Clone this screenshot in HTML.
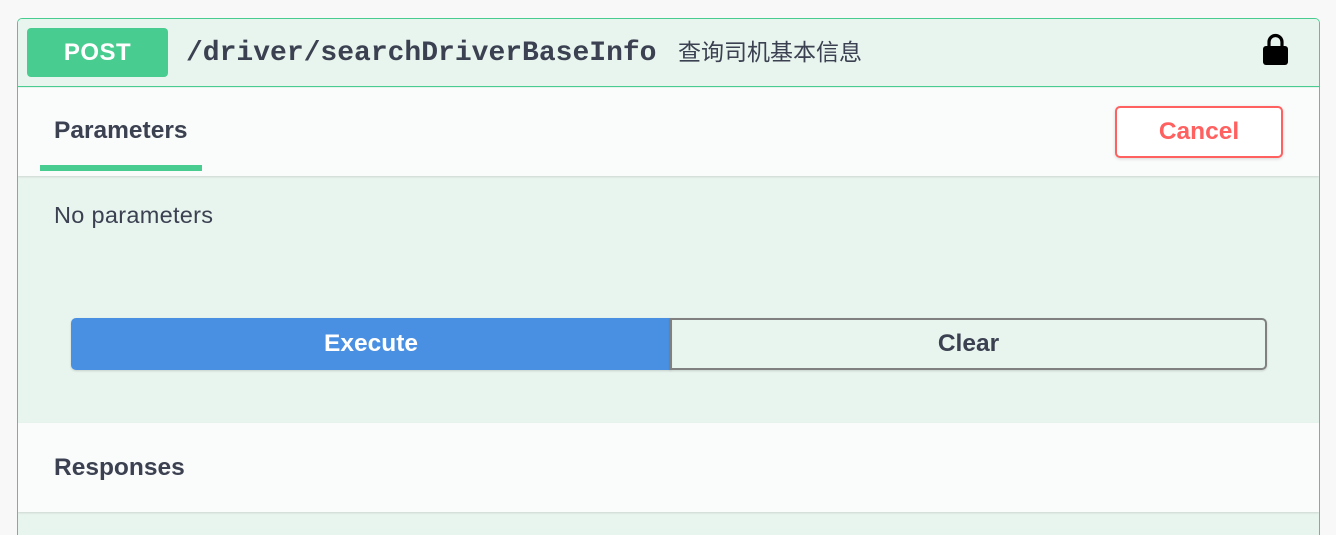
<!DOCTYPE html>
<html style="width:1336px;height:535px;overflow:hidden"><head><meta charset="utf-8"><style>
*{box-sizing:border-box;margin:0;padding:0}
body{width:1336px;height:535px;background:#f8f8f8;position:relative;overflow:hidden;font-family:"Liberation Sans","Noto Sans CJK SC",sans-serif;color:#3b4151}
.box{position:absolute;left:17px;top:18px;width:1303px;height:530px;border:1px solid #49cc90;border-radius:5px;background:#e8f4ee;overflow:hidden}
.hdr{position:absolute;left:0;top:0;right:0;height:68px;border-bottom:1px solid #49cc90;background:#e8f4ee}
.post{position:absolute;left:9px;top:9px;width:141px;height:49px;background:#49cc90;border-radius:4px;color:#fff;font-weight:bold;font-size:24px;letter-spacing:.5px;text-align:center;line-height:49px}
.path{position:absolute;left:168px;top:19px;font-family:"Liberation Mono",monospace;font-weight:bold;font-size:28px;color:#3b4151;line-height:32px;white-space:nowrap}
.desc{position:absolute;left:660px;top:18px;font-size:23px;color:#3b4151;line-height:30px;white-space:nowrap}
.lock{position:absolute;left:1244px;top:14px}
.sec{position:absolute;left:0;right:0;background:#fafbfb;box-shadow:0 1px 2px rgba(0,0,0,.12)}
.tab{position:absolute;left:36px;top:29px;font-weight:bold;font-size:24.5px;white-space:nowrap}
.uline{position:absolute;left:22px;top:77px;width:162px;height:6px;background:#49cc90}
.cancel{position:absolute;left:1097px;top:18px;width:168px;height:52px;border:2px solid #ff6060;border-radius:5px;color:#ff6060;font-weight:bold;font-size:24.5px;text-align:center;line-height:48px;background:#fff;box-shadow:0 1px 3px rgba(0,0,0,.15)}
.np{position:absolute;left:36px;top:183px;font-size:23.5px;letter-spacing:.3px;white-space:nowrap}
.exe{position:absolute;left:53px;top:299px;width:600px;height:52px;background:#4990e2;border-radius:5px 0 0 5px;color:#fff;font-weight:bold;font-size:24.5px;text-align:center;line-height:52px;box-shadow:0 1px 2px rgba(0,0,0,.15)}
.clr{position:absolute;left:652px;top:299px;width:597px;height:52px;border:2px solid #808080;border-radius:0 5px 5px 0;color:#3b4151;font-weight:bold;font-size:24.5px;text-align:center;line-height:48px;box-shadow:0 1px 2px rgba(0,0,0,.15)}
</style></head><body>
<div class="box">
 <div class="hdr">
  <div class="post">POST</div>
  <div class="path">/driver/searchDriverBaseInfo</div>
  <div class="desc">查询司机基本信息</div>
  <svg class="lock" width="27" height="33" viewBox="0 0 27 33"><path d="M7 14V9a6.5 6.5 0 0 1 13 0v5" fill="none" stroke="#000" stroke-width="3.2"/><rect x="1" y="13" width="25" height="19" rx="3" fill="#000"/></svg>
 </div>
 <div class="sec" style="top:69px;height:88px">
  <div class="tab">Parameters</div>
  <div class="uline"></div>
  <div class="cancel">Cancel</div>
 </div>
 <div class="np">No parameters</div>
 <div class="exe">Execute</div>
 <div class="clr">Clear</div>
 <div class="sec" style="top:404px;height:89px"><div class="tab" style="top:31px">Responses</div></div>
</div>
</body></html>
